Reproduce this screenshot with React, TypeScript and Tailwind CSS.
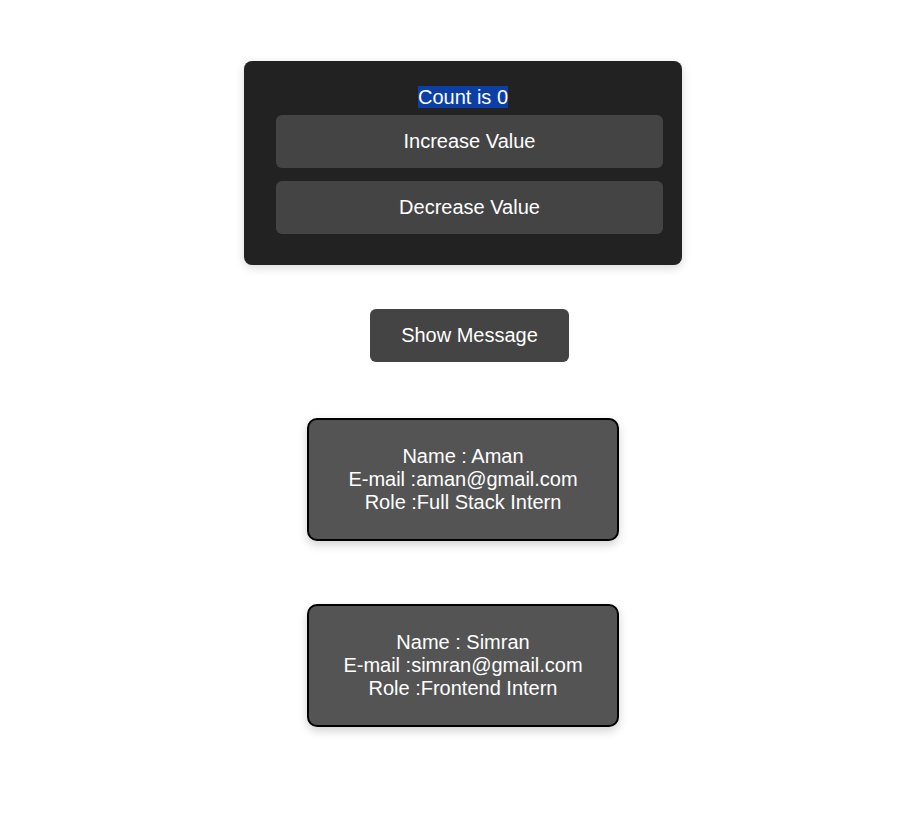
import React from "react";

export default function App() {
  return (
    <div
      className="min-h-[817px] w-full bg-white flex flex-col items-center pl-[19px] pt-[61px] text-[20px] leading-[23px] text-white"
      style={{ fontFamily: '"Liberation Sans", Arial, sans-serif' }}
    >
      <div className="w-[438px] h-[204px] bg-[#222222] rounded-[8px] shadow-[0_3px_10px_rgba(0,0,0,0.15)] pt-[25px] flex flex-col">
        <div className="text-center h-[23px]">
          <span className="bg-[#0b3fa6]">Count is 0</span>
        </div>
        <button className="ml-[32px] mt-[6px] w-[387px] h-[53px] bg-[#444444] rounded-[6px] text-white text-[20px]">
          Increase Value
        </button>
        <button className="ml-[32px] mt-[13px] w-[387px] h-[53px] bg-[#444444] rounded-[6px] text-white text-[20px]">
          Decrease Value
        </button>
      </div>

      <button className="mt-[44px] ml-[13px] w-[199px] h-[53px] bg-[#444444] rounded-[6px] text-white text-[20px]">
        Show Message
      </button>

      <div className="mt-[56px] w-[312px] h-[123px] bg-[#545454] border-2 border-black rounded-[10px] shadow-[0_4px_10px_rgba(0,0,0,0.18)] flex flex-col items-center justify-center text-center">
        <div>Name : Aman</div>
        <div>E-mail :aman@gmail.com</div>
        <div>Role :Full Stack Intern</div>
      </div>

      <div className="mt-[63px] w-[312px] h-[123px] bg-[#545454] border-2 border-black rounded-[10px] shadow-[0_4px_10px_rgba(0,0,0,0.18)] flex flex-col items-center justify-center text-center">
        <div>Name : Simran</div>
        <div>E-mail :simran@gmail.com</div>
        <div>Role :Frontend Intern</div>
      </div>
    </div>
  );
}
